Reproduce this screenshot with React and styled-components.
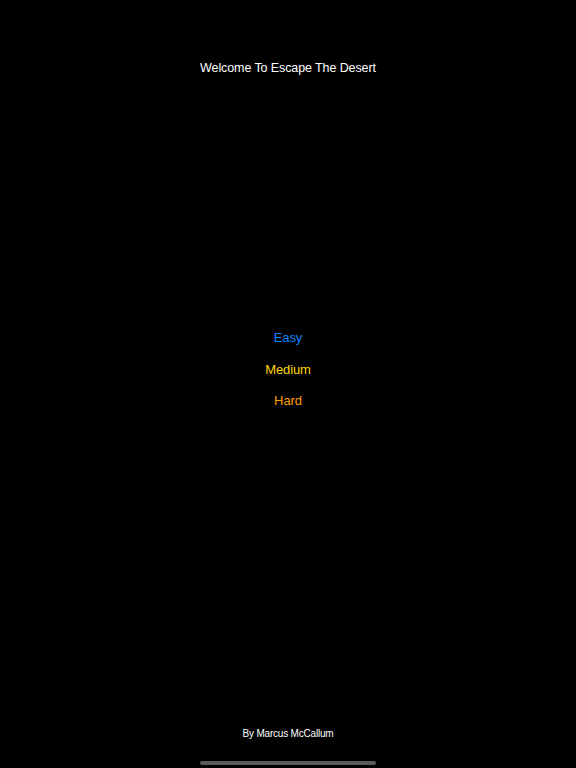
import styled, { createGlobalStyle } from 'styled-components';

const GlobalStyle = createGlobalStyle`
  html, body {
    margin: 0;
    padding: 0;
    background: #000;
  }
  body {
    font-family: "Liberation Sans", Arial, sans-serif;
    -webkit-font-smoothing: antialiased;
  }
`;

const levels = [
  { label: 'Easy', color: '#0a84ff' },
  { label: 'Medium', color: '#ffd60a' },
  { label: 'Hard', color: '#ff9f0a' },
];

function App() {
  return (
    <Screen>
      <GlobalStyle />
      <Title>Welcome To Escape The Desert</Title>

      <Menu>
        {levels.map((l) => (
          <LevelButton key={l.label} $color={l.color}>
            {l.label}
          </LevelButton>
        ))}
      </Menu>

      <Footer>By Marcus McCallum</Footer>
      <HomeIndicator />
    </Screen>
  );
}

export default App;

const Screen = styled.div`
  display: flex;
  flex-direction: column;
  align-items: center;
  height: 768px;
  background: #000;
  color: #fff;
  overflow: hidden;
`;

const Title = styled.h1`
  margin: 60px 0 0;
  font-size: 12.5px;
  font-weight: 400;
  letter-spacing: -0.1px;
  line-height: 16px;
  color: #fff;
`;

const Menu = styled.div`
  display: flex;
  flex-direction: column;
  align-items: center;
  margin-top: 246px;
`;

const LevelButton = styled.button`
  background: none;
  border: none;
  padding: 0;
  font-family: inherit;
  font-size: 13px;
  letter-spacing: -0.1px;
  line-height: 31.5px;
  color: ${(p) => p.$color};
  cursor: pointer;
`;

const Footer = styled.div`
  margin-top: auto;
  font-size: 10px;
  letter-spacing: -0.2px;
  line-height: 12px;
  color: #fff;
`;

const HomeIndicator = styled.div`
  width: 176px;
  height: 4px;
  border-radius: 2px;
  background: #5a5a5a;
  margin: 21px 0 3px;
`;
